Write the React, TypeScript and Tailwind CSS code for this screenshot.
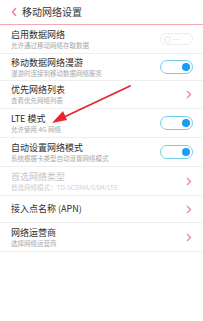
import React from 'react';

type Row = {
  title: string;
  sub?: string;
  kind: 'on' | 'off' | 'chevron';
  h: string;
  disabled?: boolean;
};

const rows: Row[] = [
  { title: '启用数据网络', sub: '允许通过移动网络存取数据', kind: 'off', h: 'h-[29px]' },
  { title: '移动数据网络漫游', sub: '漫游时连接到移动数据网络服务', kind: 'on', h: 'h-[27px]' },
  { title: '优先网络列表', sub: '查看优先网络列表', kind: 'chevron', h: 'h-[28px]' },
  { title: 'LTE 模式', sub: '允许使用 4G 网络', kind: 'on', h: 'h-[29px]' },
  { title: '自动设置网络模式', sub: '系统根据卡类型自动设置网络模式', kind: 'on', h: 'h-[29px]' },
  { title: '首选网络类型', sub: '首选网络模式：TD-SCDMA/GSM/LTE', kind: 'chevron', h: 'h-[29px]', disabled: true },
  { title: '接入点名称 (APN)', kind: 'chevron', h: 'h-[27px]' },
  { title: '网络运营商', sub: '选择网络运营商', kind: 'chevron', h: 'h-[29px]' },
];

const Chevron = () => (
  <svg width="6" height="9" viewBox="0 0 6 9" className="mr-[11px]">
    <polyline points="1,1 4.5,4.5 1,8" fill="none" stroke="#ec8b97" strokeWidth="1.4" />
  </svg>
);

const Toggle = ({ on }: { on: boolean }) =>
  on ? (
    <div className="mr-[10px] flex h-[14px] w-[33px] items-center justify-end rounded-full border-[1.5px] border-[#72cdea] bg-white pr-[2px]">
      <div className="h-[8px] w-[8px] rounded-full bg-[#1c9df2]" />
    </div>
  ) : (
    <div className="mr-[10px] flex h-[12px] w-[33px] items-center rounded-full border border-[#ececec] bg-white pl-[3px]">
      <div className="h-[7px] w-[7px] rounded-full border border-[#e6e6e6]" />
      <div className="ml-[2px] h-px w-[8px] bg-[#eeeeee]" />
    </div>
  );

export default function App() {
  return (
    <div
      className="relative h-[321px] w-[203px] overflow-hidden bg-white"
      style={{ fontFamily: '"Noto Sans CJK SC", "Noto Sans", sans-serif' }}
    >
      <div className="flex h-[25px] items-center border-b border-[#f2a9b1] pl-[11px]">
        <svg width="7" height="10" viewBox="0 0 7 10" className="mr-[4px]">
          <polyline points="5,1 1.5,5 5,9" fill="none" stroke="#ec7f8c" strokeWidth="1.4" />
        </svg>
        <span className="text-[10px] leading-none text-[#333333]">移动网络设置</span>
      </div>

      {rows.map((r) => (
        <div key={r.title} className={`flex items-center justify-between border-b border-[#efefef] pl-[11px] ${r.h}`}>
          <div className="flex flex-col">
            <span className={`text-[9px] leading-[10px] ${r.disabled ? 'text-[#c4c4c4]' : 'text-[#2e2e2e]'}`}>{r.title}</span>
            {r.sub && (
              <span className={`mt-[1px] whitespace-nowrap text-[6.5px] leading-[8px] ${r.disabled ? 'text-[#d0d0d0]' : 'text-[#a8a8a8]'}`}>
                {r.sub}
              </span>
            )}
          </div>
          {r.kind === 'chevron' ? <Chevron /> : <Toggle on={r.kind === 'on'} />}
        </div>
      ))}

      <svg className="pointer-events-none absolute left-0 top-0" width="203" height="321" viewBox="0 0 203 321">
        <line x1="130" y1="86" x2="62" y2="118" stroke="#e8262e" strokeWidth="1.8" strokeLinecap="round" />
        <polygon points="52,123 63,111 67,120" fill="#e8262e" />
      </svg>
    </div>
  );
}
